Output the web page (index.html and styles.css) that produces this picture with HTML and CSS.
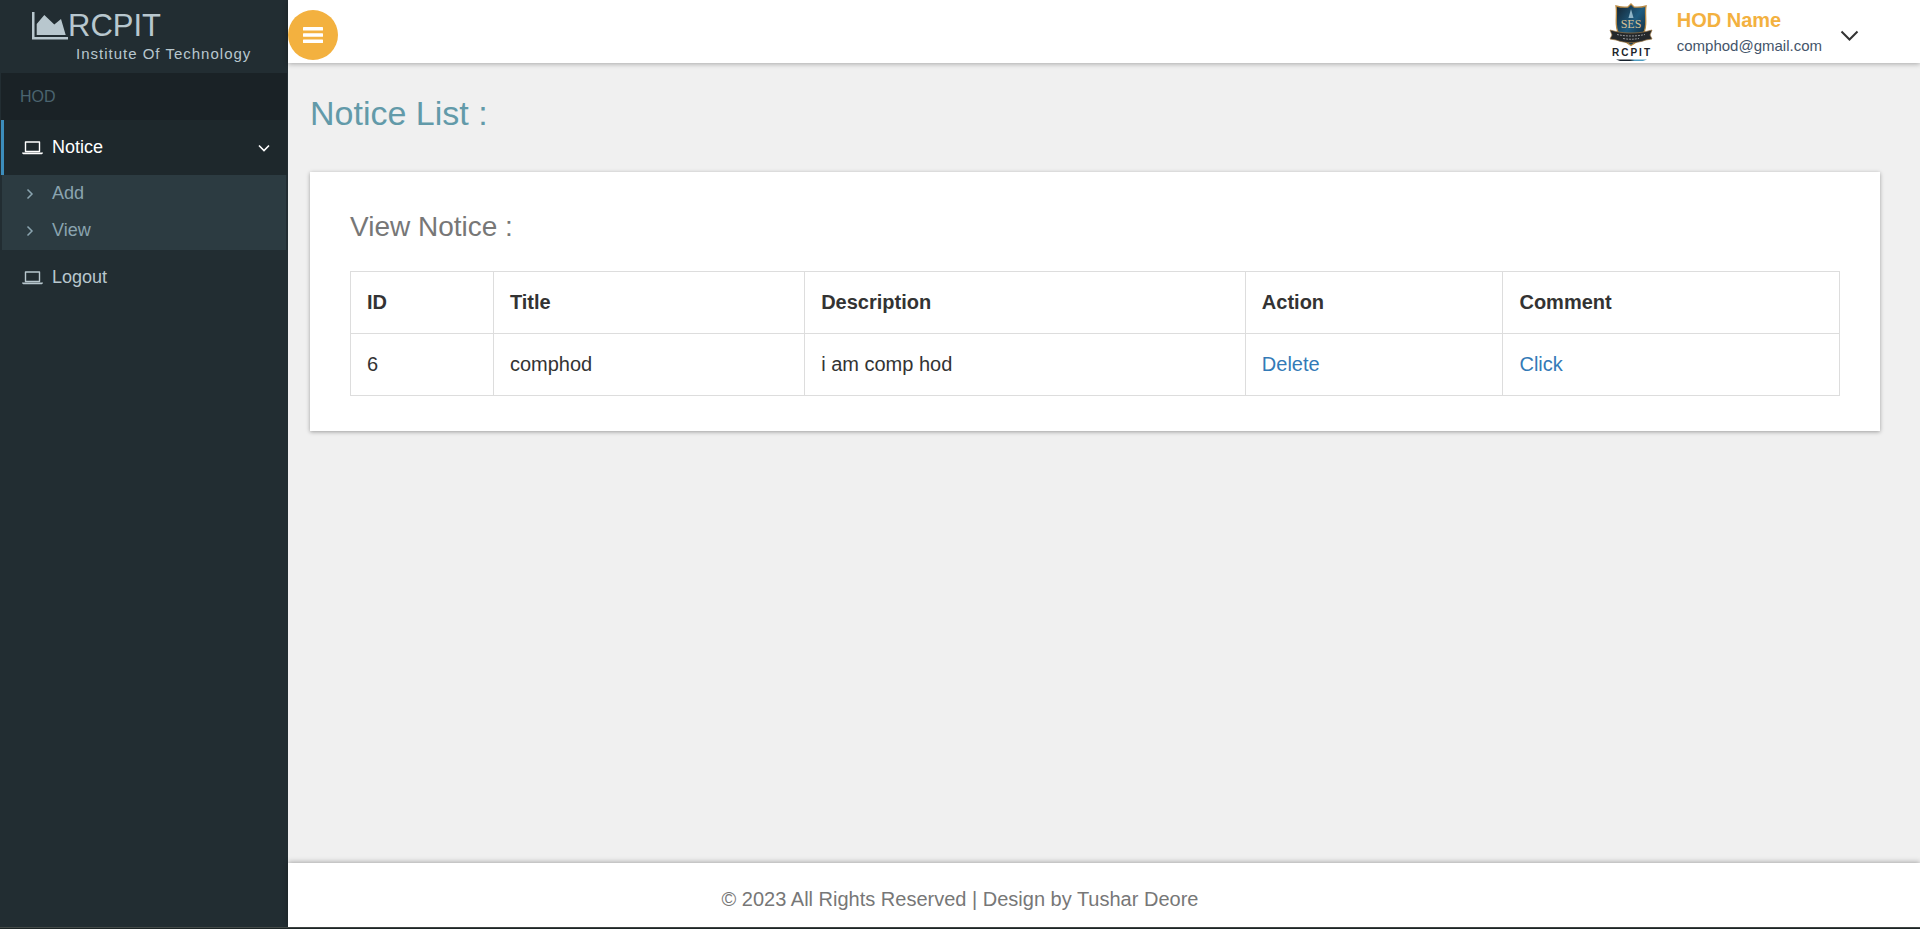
FILE: index.html
```html
<!DOCTYPE html>
<html lang="en">
<head>
<meta charset="utf-8">
<title>Notice List</title>
<link rel="stylesheet" href="styles.css">
</head>
<body>
<div class="shell">
  <aside class="sidebar">
    <a class="brand" href="#">
      <span class="brand-name">
        <svg class="brand-icon" viewBox="0 0 36 28" aria-hidden="true"><path d="M0 0h2.500v25H36v2.500H0z"/><path d="M4.700 23V12l7.600-9 10 9.500L29 7l4.700 16z"/></svg>RCPIT</span>
      <span class="brand-sub">Institute Of Technology</span>
    </a>
    <nav class="menu">
      <div class="menu-header">HOD</div>
      <a class="menu-item active" href="#">
        <svg class="laptop" viewBox="0 0 21 14" aria-hidden="true"><path d="M3.500 1h14v9.500h-14z" fill="none" stroke="currentColor" stroke-width="1.400" stroke-linejoin="round"/><path d="M0 11.500h21c0 1-.8 1.800-2 1.800H2c-1.200 0-2-.8-2-1.800z"/></svg>
        <span class="menu-label">Notice</span>
        <svg class="caret" viewBox="0 0 12 8" aria-hidden="true"><path d="M1 1.500l5 5 5-5"/></svg>
      </a>
      <div class="submenu">
        <a href="#"><svg class="arrow" viewBox="0 0 8 12" aria-hidden="true"><path d="M1.500 1.500L6 6l-4.500 4.500"/></svg>Add</a>
        <a href="#"><svg class="arrow" viewBox="0 0 8 12" aria-hidden="true"><path d="M1.500 1.500L6 6l-4.500 4.500"/></svg>View</a>
      </div>
      <a class="menu-item" href="#">
        <svg class="laptop" viewBox="0 0 21 14" aria-hidden="true"><path d="M3.500 1h14v9.500h-14z" fill="none" stroke="currentColor" stroke-width="1.400" stroke-linejoin="round"/><path d="M0 11.500h21c0 1-.8 1.800-2 1.800H2c-1.200 0-2-.8-2-1.800z"/></svg>
        <span class="menu-label">Logout</span>
      </a>
    </nav>
  </aside>
  <div class="main">
    <header class="topbar">
      <button class="toggle" type="button" aria-label="Toggle menu">
        <svg viewBox="0 0 20 16" aria-hidden="true"><rect width="20" height="3.500" rx=".6"/><rect y="6.250" width="20" height="3.500" rx=".6"/><rect y="12.500" width="20" height="3.500" rx=".6"/></svg>
      </button>
      <button class="profile" type="button">
        <svg class="crest" viewBox="0 0 44 60" aria-hidden="true">
          <defs>
            <linearGradient id="shield" x1="0" y1="0" x2="1" y2="1"><stop offset="0" stop-color="#14202c"/><stop offset=".5" stop-color="#1f5c80"/><stop offset="1" stop-color="#101a24"/></linearGradient>
            <linearGradient id="rule" x1="0" x2="1"><stop offset=".45" stop-color="#15202c"/><stop offset=".6" stop-color="#4f9cc0"/></linearGradient>
          </defs>
          <path d="M22 2l3 3c4 .5 9-.2 12-1-1 5 0 11-.3 18-.5 11-6 16-14.700 21.500C13.300 38 7.800 33 7.300 22 7 15 8 9 7 4c3 .8 8 1.500 12 1z" fill="url(#shield)" stroke="#b98a45" stroke-width="1.300"/>
          <path d="M22 7l2.500 9h-5z" fill="#8fb4c6"/>
          <text class="crest-initials" x="22" y="26" text-anchor="middle">SES</text>
          <path d="M1 28l6 1.500c9 2 21 2 30 0l6-1.500-2 5 2 4-6 1c-9 3.500-21 3.500-30 0l-6-1 2-4z" fill="#24282b" stroke="#9a7442" stroke-width=".7"/>
          <path d="M8 32.500c9 2 19 2 28 0M14 36.500c6 1 10 1 16 0" fill="none" stroke="#94979a" stroke-width="1" stroke-dasharray="2 1"/>
          <text class="crest-name" x="23" y="54" text-anchor="middle">RCPIT</text>
          <path d="M7 57.500h31l-4 1.500H11z" fill="url(#rule)"/>
        </svg>
        <span class="person">
          <span class="person-name">HOD Name</span>
          <span class="person-mail">comphod@gmail.com</span>
        </span>
        <svg class="profile-caret" viewBox="0 0 18 12" aria-hidden="true"><path d="M1 1.500l8 8 8-8"/></svg>
      </button>
    </header>
    <main class="content">
      <h1>Notice List :</h1>
      <section class="card">
        <h2>View Notice :</h2>
        <table>
          <colgroup><col class="c-id"><col class="c-title"><col class="c-desc"><col class="c-action"><col class="c-comment"></colgroup>
          <thead><tr><th>ID</th><th>Title</th><th>Description</th><th>Action</th><th>Comment</th></tr></thead>
          <tbody><tr><td>6</td><td>comphod</td><td>i am comp hod</td><td><a href="#">Delete</a></td><td><a href="#">Click</a></td></tr></tbody>
        </table>
      </section>
    </main>
    <footer class="footer">© 2023 All Rights Reserved | Design by Tushar Deore</footer>
  </div>
</div>
</body>
</html>
```
FILE: styles.css
```css
:root { --sidebar: 288px; }
* { box-sizing: border-box; }
body {
  margin: 0;
  font-family: "Liberation Sans", Arial, sans-serif;
  font-size: 20px;
  color: #333;
  background: #1c2526;
}
a { text-decoration: none; color: #337ab7; }
button { font: inherit; border: 0; padding: 0; background: none; cursor: pointer; }
svg { display: block; flex: none; fill: currentColor; }

.shell {
  display: grid;
  grid-template-columns: var(--sidebar) 1fr;
  min-height: calc(100vh - 1px);
  border-bottom: 1px solid #444a48;
}

.sidebar { background: #222d32; color: #b8c7ce; }
.brand { display: block; height: 73px; padding: 8px 0 0 32px; color: #b8c7ce; }
.brand-name { display: flex; align-items: center; font-size: 31px; line-height: 36px; }
.brand-icon { width: 36px; height: 28px; }
.brand-sub { display: block; padding-left: 44px; font-size: 15px; line-height: 20px; letter-spacing: 1px; }

.menu { padding: 0 1px; font-size: 18px; }
.menu-header { padding: 0 19px; font-size: 16px; line-height: 47px; color: #4b646f; background: #1a2226; }
.menu-item {
  display: flex;
  align-items: center;
  height: 55px;
  padding: 0 17px 0 18px;
  border-left: 3px solid transparent;
  color: #b8c7ce;
}
.menu-item.active { color: #fff; background: #1e282c; border-color: #3c8dbc; }
.laptop { width: 21px; height: 14px; margin-right: 9px; }
.menu-label { flex: 1; }
.caret { width: 12px; height: 8px; }
.caret path, .arrow path, .profile-caret path { fill: none; stroke: currentColor; stroke-width: 2; }
.caret path { stroke-width: 1.6; }
.submenu { margin: 0 1px; padding-bottom: 1px; background: #2c3b41; }
.submenu a { display: flex; align-items: center; height: 37px; padding-left: 24px; color: #8aa4af; }
.submenu .arrow { width: 8px; height: 12px; margin-right: 18px; }
.submenu .arrow path { stroke-width: 1.5; }

.main { display: flex; flex-direction: column; min-width: 0; background: #f0f0f0; }
.topbar {
  display: flex;
  justify-content: space-between;
  align-items: center;
  height: 63px;
  padding-right: 61px;
  background: #fff;
  box-shadow: 0 1px 5px rgba(0, 0, 0, .3);
}
.toggle {
  display: flex;
  align-items: center;
  justify-content: center;
  width: 50px;
  height: 50px;
  margin-top: 7px;
  border-radius: 50%;
  color: #fff;
  background: #f3b13f;
}
.toggle svg { width: 20px; height: 16px; }
.profile { display: flex; align-items: center; text-align: left; }
.crest { width: 44px; height: 60px; margin-right: 24px; }
.crest-initials { font: 12px "Liberation Serif", serif; fill: #d8c294; }
.crest-name { font: bold 10px "Liberation Sans", sans-serif; letter-spacing: 2px; fill: #20242a; }
.person { margin-right: 18px; }
.person-name { display: block; font-weight: bold; line-height: 28px; color: #f3b13f; }
.person-mail { display: block; font-size: 15px; line-height: 24px; color: #44546a; }
.profile-caret { width: 19px; height: 12px; margin-top: 8px; color: #333; }

.content { flex: 1; padding: 30px 40px 40px 22px; }
h1, h2 { margin: 0; font-weight: normal; }
h1 { font-size: 34px; line-height: 40px; color: #629aa9; }
.card {
  margin-top: 39px;
  padding: 37px 40px 35px;
  background: #fff;
  box-shadow: 0 1px 4px rgba(0, 0, 0, .35);
}
h2 { margin-bottom: 26px; font-size: 28px; line-height: 36px; color: #777; }
table { width: 100%; table-layout: fixed; border-collapse: collapse; }
.c-id { width: 9.6%; }
.c-title { width: 20.9%; }
.c-desc { width: 29.6%; }
.c-action { width: 17.3%; }
th, td { height: 62px; padding: 0 16px; border: 1px solid #ddd; text-align: left; }

.footer {
  height: 64px;
  padding: 9px var(--sidebar) 0 0;
  line-height: 55px;
  text-align: center;
  color: #777;
  background: #fff;
  box-shadow: 0 -1px 5px rgba(0, 0, 0, .3);
}
```
